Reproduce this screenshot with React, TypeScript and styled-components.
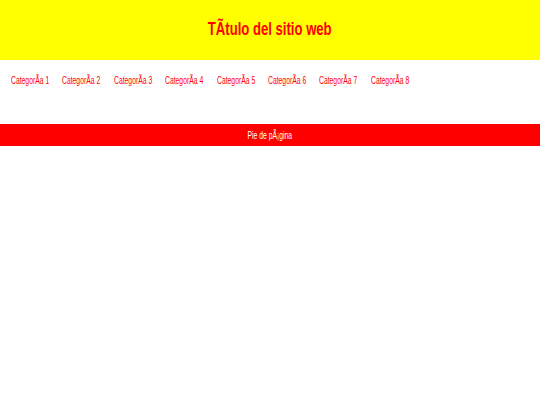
import React from 'react';
import styled, { createGlobalStyle } from 'styled-components';

const categories = [1, 2, 3, 4, 5, 6, 7, 8];

// the page text is shown squeezed sideways, so every label is narrowed
const squeeze = 0.68;

const siteTitle = 'T\u00C3\u00ADtulo del sitio web';
const categoryName = 'Categor\u00C3\u00ADa';
const footerText = 'Pie de p\u00C3\u00A1gina';

const GlobalStyle = createGlobalStyle`
  html, body {
    margin: 0;
    padding: 0;
    background: #ffffff;
    font-family: "Liberation Sans", Arial, sans-serif;
  }
`;

const Page = styled.div`
  display: flex;
  flex-direction: column;
  width: 100%;
`;

const Header = styled.header`
  display: flex;
  align-items: center;
  justify-content: center;
  height: 60px;
  padding-bottom: 2px;
  box-sizing: border-box;
  background-color: #ffff00;
`;

const Title = styled.h1`
  margin: 0;
  display: inline-block;
  font-size: 19px;
  font-weight: bold;
  color: #ff0000;
  transform: scaleX(0.69);
  white-space: nowrap;
`;

const Nav = styled.nav`
  height: 64px;
  padding: 15px 0 0 11px;
  box-sizing: border-box;
`;

const NavList = styled.ul`
  display: flex;
  margin: 0;
  padding: 0;
  list-style: none;
`;

const NavItem = styled.li`
  width: 51.4px;
  flex: none;
  font-size: 10px;
  color: #ff0000;
  white-space: nowrap;
`;

const Label = styled.span<{ $origin?: string }>`
  display: inline-block;
  transform: scaleX(${squeeze});
  transform-origin: ${(p) => p.$origin || 'left'} center;
`;

const Footer = styled.footer`
  display: flex;
  align-items: center;
  justify-content: center;
  height: 22px;
  background-color: #ff0000;
  color: #ffffff;
  font-size: 10px;
`;

const App: React.FC = () => {
  return (
    <>
      <GlobalStyle />
      <Page>
        <Header>
          <Title>{siteTitle}</Title>
        </Header>
        <Nav>
          <NavList>
            {categories.map((n) => (
              <NavItem key={n}>
                <Label>{`${categoryName} ${n}`}</Label>
              </NavItem>
            ))}
          </NavList>
        </Nav>
        <Footer>
          <Label $origin="center">{footerText}</Label>
        </Footer>
      </Page>
    </>
  );
};

export default App;
